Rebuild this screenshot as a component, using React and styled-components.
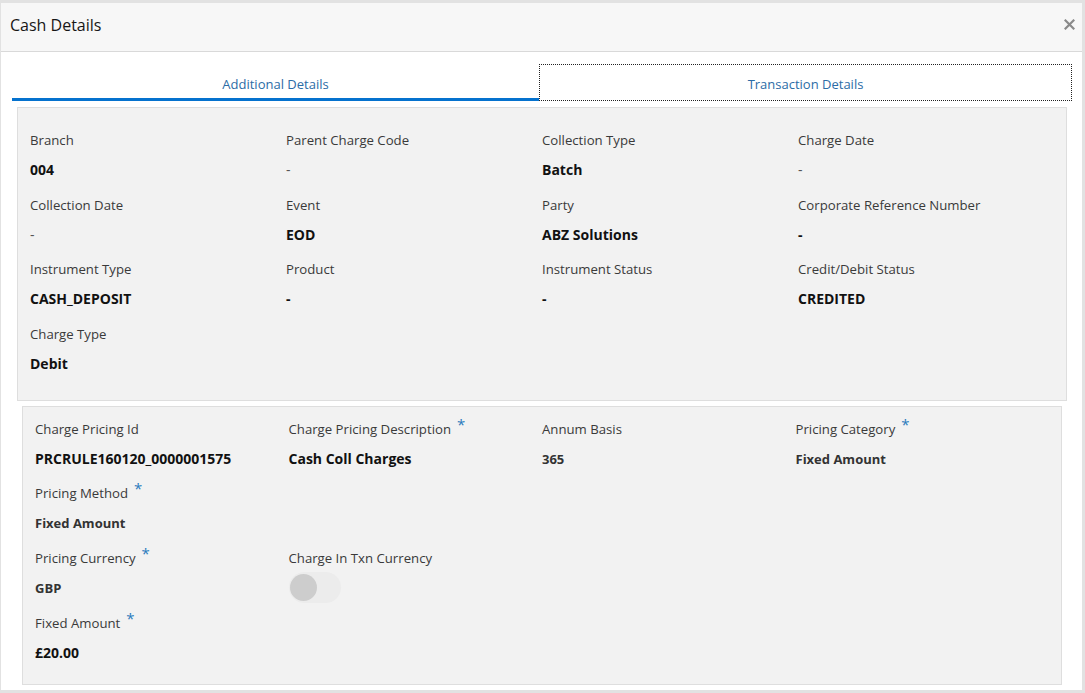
import React from 'react';
import styled, { createGlobalStyle } from 'styled-components';

const GlobalStyle = createGlobalStyle`
  html, body {
    margin: 0;
    padding: 0;
    background: #e2e2e2;
  }
  body {
    font-family: "Segoe UI", "Open Sans", "Noto Sans", sans-serif;
    color: #333;
  }
`;

const Dialog = styled.div`
  margin: 3px 3px 3px 1px;
  height: 687px;
  background: #fff;
  display: flex;
  flex-direction: column;
  box-sizing: border-box;
`;

const Header = styled.div`
  height: 49px;
  background: #f7f7f7;
  border-bottom: 1px solid #d9d9d9;
  display: flex;
  align-items: center;
  justify-content: space-between;
  padding: 0 6px 5px 9px;
  box-sizing: border-box;
`;

const Title = styled.h1`
  margin: 0;
  font-size: 16px;
  font-weight: 400;
  color: #161616;
`;

const CloseButton = styled.button`
  border: 0;
  background: none;
  padding: 0;
  width: 14px;
  height: 14px;
  display: flex;
  align-items: center;
  justify-content: center;
  cursor: pointer;
`;

const Tabs = styled.div`
  display: grid;
  grid-template-columns: 527px 533px;
  margin: 12px 0 0 11px;
  height: 37px;
`;

const Tab = styled.div`
  display: flex;
  align-items: flex-start;
  justify-content: center;
  padding-top: 10px;
  line-height: 20px;
  font-size: 13px;
  color: #2c6ca6;
  box-sizing: border-box;
  border-bottom: 3px solid ${p => (p.$active ? '#0572ce' : 'transparent')};
  outline: ${p => (p.$focused ? '1px dotted #222' : 'none')};
  outline-offset: -1px;
`;

const Panel = styled.div`
  margin: ${p => p.$margin};
  width: ${p => p.$width}px;
  background: #f2f2f2;
  border: 1px solid #dedede;
  box-sizing: border-box;
  padding: ${p => p.$padding};
  display: grid;
  grid-template-columns: repeat(4, 1fr);
  row-gap: ${p => p.$gap}px;
`;

const Field = styled.div`
  grid-column-start: ${p => (p.$newRow ? 1 : 'auto')};
  display: flex;
  flex-direction: column;
  min-width: 0;
`;

const Label = styled.div`
  font-size: 13.2px;
  line-height: 20px;
  height: 20px;
  color: #3a3a3a;
  white-space: nowrap;
`;

const Required = styled.span`
  color: #2a7bbd;
  font-size: 15px;
  line-height: 0;
  margin-left: 6px;
  position: relative;
  top: -4px;
`;

const Value = styled.div`
  margin-top: 10px;
  font-size: ${p => (p.$small ? '13px' : '14px')};
  line-height: 20px;
  font-weight: ${p => (p.$plain ? 400 : 700)};
  color: ${p => (p.$plain ? '#555' : p.$small ? '#333' : '#111')};
  white-space: nowrap;
`;

const Toggle = styled.div`
  width: 52px;
  height: 31px;
  margin: 4px 0 -5px;
  border-radius: 16px;
  background: #ececec;
  display: flex;
  align-items: center;
  padding-left: 1px;
  box-sizing: border-box;
`;

const Knob = styled.div`
  width: 27px;
  height: 27px;
  border-radius: 50%;
  background: #cdcdcd;
`;

const additional = [
  { label: 'Branch', value: '004' },
  { label: 'Parent Charge Code', value: '-', plain: true },
  { label: 'Collection Type', value: 'Batch' },
  { label: 'Charge Date', value: '-', plain: true },
  { label: 'Collection Date', value: '-', plain: true },
  { label: 'Event', value: 'EOD' },
  { label: 'Party', value: 'ABZ Solutions' },
  { label: 'Corporate Reference Number', value: '-' },
  { label: 'Instrument Type', value: 'CASH_DEPOSIT' },
  { label: 'Product', value: '-' },
  { label: 'Instrument Status', value: '-' },
  { label: 'Credit/Debit Status', value: 'CREDITED' },
  { label: 'Charge Type', value: 'Debit' },
];

const pricing = [
  { label: 'Charge Pricing Id', value: 'PRCRULE160120_0000001575' },
  { label: 'Charge Pricing Description', value: 'Cash Coll Charges', required: true },
  { label: 'Annum Basis', value: '365', small: true },
  { label: 'Pricing Category', value: 'Fixed Amount', required: true, small: true },
  { label: 'Pricing Method', value: 'Fixed Amount', required: true, small: true, newRow: true },
  { label: 'Pricing Currency', value: 'GBP', required: true, small: true, newRow: true },
  { label: 'Charge In Txn Currency', toggle: true },
  { label: 'Fixed Amount', value: '£20.00', required: true, newRow: true },
];

function FieldItem({ item }) {
  return (
    <Field $newRow={item.newRow}>
      <Label>
        {item.label}
        {item.required && <Required>*</Required>}
      </Label>
      {item.toggle ? (
        <Toggle>
          <Knob />
        </Toggle>
      ) : (
        <Value $plain={item.plain} $small={item.small}>{item.value}</Value>
      )}
    </Field>
  );
}

export default function App() {
  return (
    <>
      <GlobalStyle />
      <Dialog>
        <Header>
          <Title>Cash Details</Title>
          <CloseButton aria-label="Close">
            <svg width="11" height="11" viewBox="0 0 11 11">
              <path d="M1.5 1.5 L9.5 9.5 M9.5 1.5 L1.5 9.5" stroke="#8a8a8a" strokeWidth="2.2" strokeLinecap="square" />
            </svg>
          </CloseButton>
        </Header>
        <Tabs>
          <Tab $active>Additional Details</Tab>
          <Tab $focused>Transaction Details</Tab>
        </Tabs>
        <Panel $margin="6px 0 0 16px" $width={1050} $padding="22px 12px 26px 12px" $gap={14.5}>
          {additional.map(item => (
            <FieldItem key={item.label} item={item} />
          ))}
        </Panel>
        <Panel $margin="5px 0 0 21px" $width={1040} $padding="12px 12px 21px 12px" $gap={14.7}>
          {pricing.map(item => (
            <FieldItem key={item.label} item={item} />
          ))}
        </Panel>
      </Dialog>
    </>
  );
}
